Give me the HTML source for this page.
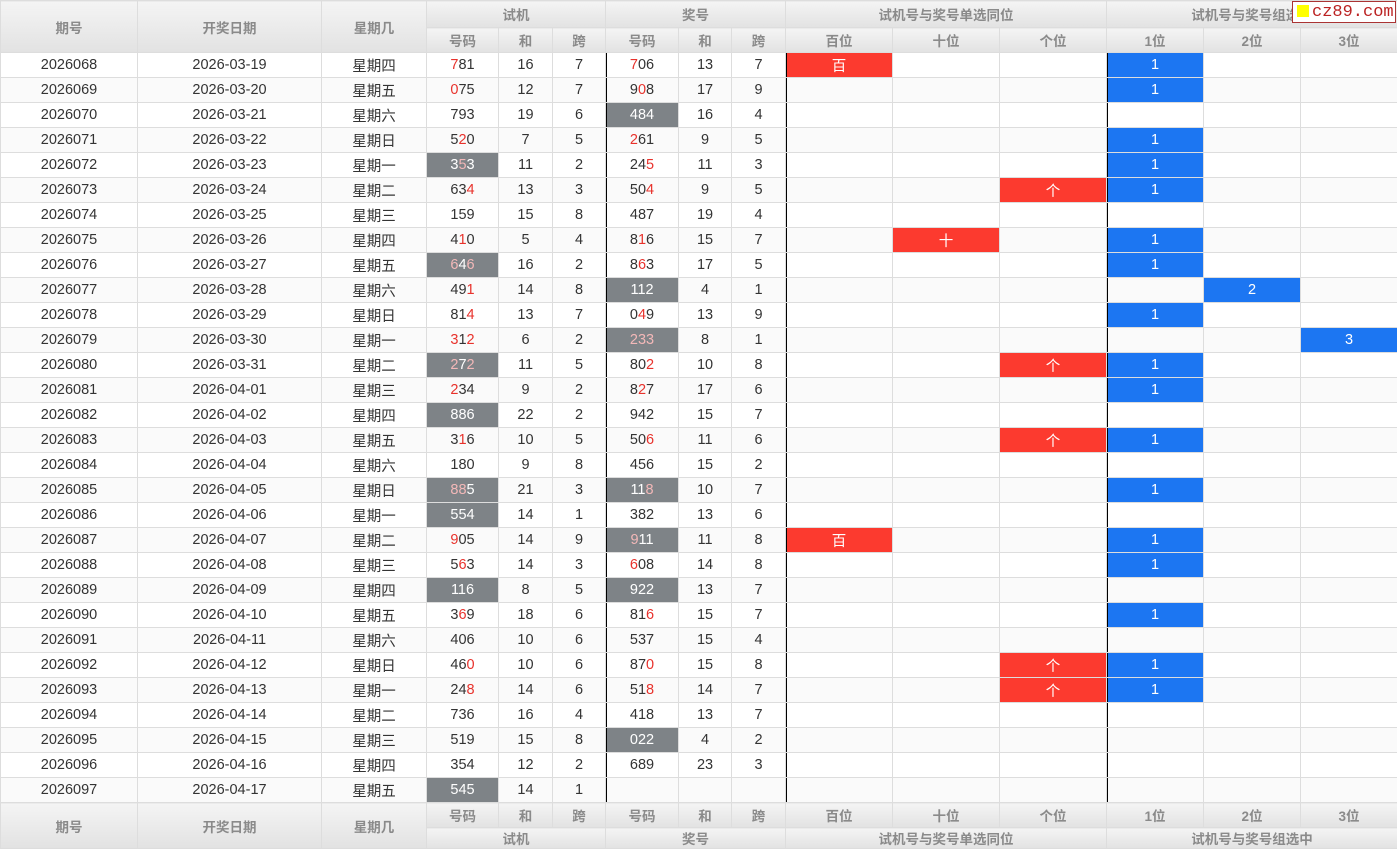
<!DOCTYPE html>
<html><head><meta charset="utf-8"><style>
body{margin:0;background:#fff;font-family:"Liberation Sans","Noto Sans CJK SC",sans-serif;}
table{border-collapse:collapse;table-layout:fixed;width:1397px;font-size:14.5px;color:#333}
td,th{border:1px solid #ddd;text-align:center;padding:0;height:24px;overflow:hidden;white-space:nowrap}
th{background:linear-gradient(#f4f4f4,#e2e2e2);color:#8a8a8a;font-weight:bold;font-size:13.5px}
thead tr:first-child th{height:26px}
tfoot tr:last-child th{height:20px}
tbody tr:nth-child(even) td{background:#fafafa}
tbody tr td.g{background:#7e8387;color:#fff}
i{font-style:normal;color:#e8322c}
.g i{color:#f3b8b8}
td.bl{box-shadow:inset 1px 0 0 #000}
tbody tr td.R{background:#fc3a2f;color:#fff}
tbody tr td.B{background:#1c76f2;color:#fff}
.logo{position:absolute;left:1292px;top:1px;width:104px;height:22px;background:#fff;border:1px solid #a33;color:#b22;font-family:"Liberation Mono",monospace;font-size:17px;line-height:22px;box-sizing:border-box}
.logo span{display:inline-block;width:12px;height:12px;background:#ff0;margin:0 3px 0 4px;vertical-align:-1px}
</style></head><body>
<div class="logo"><span></span>cz89.com</div>
<table>
<colgroup><col width="137"><col width="184"><col width="105"><col width="72"><col width="54"><col width="53"><col width="73"><col width="53"><col width="54"><col width="107"><col width="107"><col width="107"><col width="97"><col width="97"><col width="97"></colgroup>
<thead>
<tr><th rowspan="2">期号</th><th rowspan="2">开奖日期</th><th rowspan="2">星期几</th><th colspan="3">试机</th><th colspan="3">奖号</th><th colspan="3">试机号与奖号单选同位</th><th colspan="3">试机号与奖号组选中</th></tr>
<tr><th>号码</th><th>和</th><th>跨</th><th>号码</th><th>和</th><th>跨</th><th>百位</th><th>十位</th><th>个位</th><th>1位</th><th>2位</th><th>3位</th></tr>
</thead>
<tbody>
<tr><td>2026068</td><td>2026-03-19</td><td>星期四</td><td><i>7</i>81</td><td>16</td><td>7</td><td class="bl"><i>7</i>06</td><td>13</td><td>7</td><td class="R bl">百</td><td></td><td></td><td class="B bl">1</td><td></td><td></td></tr>
<tr><td>2026069</td><td>2026-03-20</td><td>星期五</td><td><i>0</i>75</td><td>12</td><td>7</td><td class="bl">9<i>0</i>8</td><td>17</td><td>9</td><td class="bl"></td><td></td><td></td><td class="B bl">1</td><td></td><td></td></tr>
<tr><td>2026070</td><td>2026-03-21</td><td>星期六</td><td>793</td><td>19</td><td>6</td><td class="g bl">484</td><td>16</td><td>4</td><td class="bl"></td><td></td><td></td><td class="bl"></td><td></td><td></td></tr>
<tr><td>2026071</td><td>2026-03-22</td><td>星期日</td><td>5<i>2</i>0</td><td>7</td><td>5</td><td class="bl"><i>2</i>61</td><td>9</td><td>5</td><td class="bl"></td><td></td><td></td><td class="B bl">1</td><td></td><td></td></tr>
<tr><td>2026072</td><td>2026-03-23</td><td>星期一</td><td class="g">3<i>5</i>3</td><td>11</td><td>2</td><td class="bl">24<i>5</i></td><td>11</td><td>3</td><td class="bl"></td><td></td><td></td><td class="B bl">1</td><td></td><td></td></tr>
<tr><td>2026073</td><td>2026-03-24</td><td>星期二</td><td>63<i>4</i></td><td>13</td><td>3</td><td class="bl">50<i>4</i></td><td>9</td><td>5</td><td class="bl"></td><td></td><td class="R">个</td><td class="B bl">1</td><td></td><td></td></tr>
<tr><td>2026074</td><td>2026-03-25</td><td>星期三</td><td>159</td><td>15</td><td>8</td><td class="bl">487</td><td>19</td><td>4</td><td class="bl"></td><td></td><td></td><td class="bl"></td><td></td><td></td></tr>
<tr><td>2026075</td><td>2026-03-26</td><td>星期四</td><td>4<i>1</i>0</td><td>5</td><td>4</td><td class="bl">8<i>1</i>6</td><td>15</td><td>7</td><td class="bl"></td><td class="R">十</td><td></td><td class="B bl">1</td><td></td><td></td></tr>
<tr><td>2026076</td><td>2026-03-27</td><td>星期五</td><td class="g"><i>6</i>4<i>6</i></td><td>16</td><td>2</td><td class="bl">8<i>6</i>3</td><td>17</td><td>5</td><td class="bl"></td><td></td><td></td><td class="B bl">1</td><td></td><td></td></tr>
<tr><td>2026077</td><td>2026-03-28</td><td>星期六</td><td>49<i>1</i></td><td>14</td><td>8</td><td class="g bl">112</td><td>4</td><td>1</td><td class="bl"></td><td></td><td></td><td class="bl"></td><td class="B">2</td><td></td></tr>
<tr><td>2026078</td><td>2026-03-29</td><td>星期日</td><td>81<i>4</i></td><td>13</td><td>7</td><td class="bl">0<i>4</i>9</td><td>13</td><td>9</td><td class="bl"></td><td></td><td></td><td class="B bl">1</td><td></td><td></td></tr>
<tr><td>2026079</td><td>2026-03-30</td><td>星期一</td><td><i>3</i>1<i>2</i></td><td>6</td><td>2</td><td class="g bl"><i>233</i></td><td>8</td><td>1</td><td class="bl"></td><td></td><td></td><td class="bl"></td><td></td><td class="B">3</td></tr>
<tr><td>2026080</td><td>2026-03-31</td><td>星期二</td><td class="g"><i>2</i>7<i>2</i></td><td>11</td><td>5</td><td class="bl">80<i>2</i></td><td>10</td><td>8</td><td class="bl"></td><td></td><td class="R">个</td><td class="B bl">1</td><td></td><td></td></tr>
<tr><td>2026081</td><td>2026-04-01</td><td>星期三</td><td><i>2</i>34</td><td>9</td><td>2</td><td class="bl">8<i>2</i>7</td><td>17</td><td>6</td><td class="bl"></td><td></td><td></td><td class="B bl">1</td><td></td><td></td></tr>
<tr><td>2026082</td><td>2026-04-02</td><td>星期四</td><td class="g">886</td><td>22</td><td>2</td><td class="bl">942</td><td>15</td><td>7</td><td class="bl"></td><td></td><td></td><td class="bl"></td><td></td><td></td></tr>
<tr><td>2026083</td><td>2026-04-03</td><td>星期五</td><td>3<i>1</i>6</td><td>10</td><td>5</td><td class="bl">50<i>6</i></td><td>11</td><td>6</td><td class="bl"></td><td></td><td class="R">个</td><td class="B bl">1</td><td></td><td></td></tr>
<tr><td>2026084</td><td>2026-04-04</td><td>星期六</td><td>180</td><td>9</td><td>8</td><td class="bl">456</td><td>15</td><td>2</td><td class="bl"></td><td></td><td></td><td class="bl"></td><td></td><td></td></tr>
<tr><td>2026085</td><td>2026-04-05</td><td>星期日</td><td class="g"><i>88</i>5</td><td>21</td><td>3</td><td class="g bl">11<i>8</i></td><td>10</td><td>7</td><td class="bl"></td><td></td><td></td><td class="B bl">1</td><td></td><td></td></tr>
<tr><td>2026086</td><td>2026-04-06</td><td>星期一</td><td class="g">554</td><td>14</td><td>1</td><td class="bl">382</td><td>13</td><td>6</td><td class="bl"></td><td></td><td></td><td class="bl"></td><td></td><td></td></tr>
<tr><td>2026087</td><td>2026-04-07</td><td>星期二</td><td><i>9</i>05</td><td>14</td><td>9</td><td class="g bl"><i>9</i>11</td><td>11</td><td>8</td><td class="R bl">百</td><td></td><td></td><td class="B bl">1</td><td></td><td></td></tr>
<tr><td>2026088</td><td>2026-04-08</td><td>星期三</td><td>5<i>6</i>3</td><td>14</td><td>3</td><td class="bl"><i>6</i>08</td><td>14</td><td>8</td><td class="bl"></td><td></td><td></td><td class="B bl">1</td><td></td><td></td></tr>
<tr><td>2026089</td><td>2026-04-09</td><td>星期四</td><td class="g">116</td><td>8</td><td>5</td><td class="g bl">922</td><td>13</td><td>7</td><td class="bl"></td><td></td><td></td><td class="bl"></td><td></td><td></td></tr>
<tr><td>2026090</td><td>2026-04-10</td><td>星期五</td><td>3<i>6</i>9</td><td>18</td><td>6</td><td class="bl">81<i>6</i></td><td>15</td><td>7</td><td class="bl"></td><td></td><td></td><td class="B bl">1</td><td></td><td></td></tr>
<tr><td>2026091</td><td>2026-04-11</td><td>星期六</td><td>406</td><td>10</td><td>6</td><td class="bl">537</td><td>15</td><td>4</td><td class="bl"></td><td></td><td></td><td class="bl"></td><td></td><td></td></tr>
<tr><td>2026092</td><td>2026-04-12</td><td>星期日</td><td>46<i>0</i></td><td>10</td><td>6</td><td class="bl">87<i>0</i></td><td>15</td><td>8</td><td class="bl"></td><td></td><td class="R">个</td><td class="B bl">1</td><td></td><td></td></tr>
<tr><td>2026093</td><td>2026-04-13</td><td>星期一</td><td>24<i>8</i></td><td>14</td><td>6</td><td class="bl">51<i>8</i></td><td>14</td><td>7</td><td class="bl"></td><td></td><td class="R">个</td><td class="B bl">1</td><td></td><td></td></tr>
<tr><td>2026094</td><td>2026-04-14</td><td>星期二</td><td>736</td><td>16</td><td>4</td><td class="bl">418</td><td>13</td><td>7</td><td class="bl"></td><td></td><td></td><td class="bl"></td><td></td><td></td></tr>
<tr><td>2026095</td><td>2026-04-15</td><td>星期三</td><td>519</td><td>15</td><td>8</td><td class="g bl">022</td><td>4</td><td>2</td><td class="bl"></td><td></td><td></td><td class="bl"></td><td></td><td></td></tr>
<tr><td>2026096</td><td>2026-04-16</td><td>星期四</td><td>354</td><td>12</td><td>2</td><td class="bl">689</td><td>23</td><td>3</td><td class="bl"></td><td></td><td></td><td class="bl"></td><td></td><td></td></tr>
<tr><td>2026097</td><td>2026-04-17</td><td>星期五</td><td class="g">545</td><td>14</td><td>1</td><td class="bl"></td><td></td><td></td><td class="bl"></td><td></td><td></td><td class="bl"></td><td></td><td></td></tr>
</tbody>
<tfoot>
<tr><th rowspan="2">期号</th><th rowspan="2">开奖日期</th><th rowspan="2">星期几</th><th>号码</th><th>和</th><th>跨</th><th>号码</th><th>和</th><th>跨</th><th>百位</th><th>十位</th><th>个位</th><th>1位</th><th>2位</th><th>3位</th></tr>
<tr><th colspan="3">试机</th><th colspan="3">奖号</th><th colspan="3">试机号与奖号单选同位</th><th colspan="3">试机号与奖号组选中</th></tr>
</tfoot>
</table>
</body></html>
